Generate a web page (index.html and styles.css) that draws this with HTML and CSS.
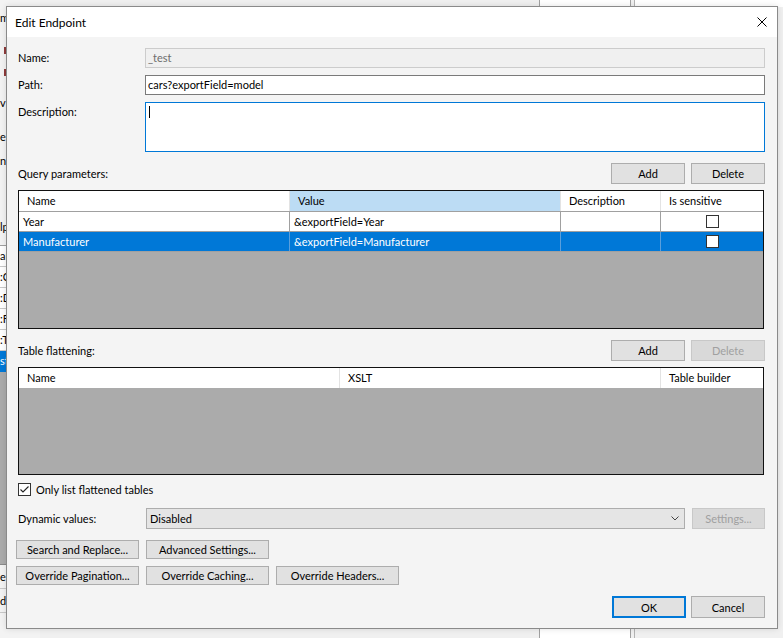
FILE: index.html
```html
<!DOCTYPE html>
<html>
<head>
<meta charset="utf-8">
<title>Edit Endpoint</title>
<link rel="stylesheet" href="styles.css">
</head>
<body>
<div class="desk">
  <div class="bgwin">
    <span class="frag f-m">m</span>
    <span class="mark mark1"></span>
    <span class="mark mark2"></span>
    <span class="frag f-v">v</span>
    <span class="frag f-e">e</span>
    <span class="frag f-ne">n</span>
    <span class="frag f-lp">lp</span>
    <div class="bglist">
      <div class="bgrow">ar</div>
      <div class="bgrow">:C</div>
      <div class="bgrow">:D</div>
      <div class="bgrow">:F</div>
      <div class="bgrow">:T</div>
      <div class="bgrow sel">st</div>
      <div class="bgfill"></div>
      <div class="bgrow tall">e</div>
      <div class="bgrow tall">dv</div>
    </div>
  </div>
  <div class="bgcol"></div>
  <div class="bgline"></div>
  <div class="bgtopright"></div>

  <div class="dialog">
    <div class="titlebar">
      <span class="title">Edit Endpoint</span>
      <svg class="close" width="10" height="10" viewBox="0 0 10 10"><path d="M0.5 0.5L9.5 9.5M9.5 0.5L0.5 9.5" stroke="#000" stroke-width="1" fill="none"/></svg>
    </div>
    <div class="body">
      <div class="form">
        <div class="lbl">Name:</div>
        <div class="input disabled">_test</div>
        <div class="lbl">Path:</div>
        <div class="input">cars?exportField=model</div>
        <div class="lbl">Description:</div>
        <div class="input focus"><span class="caret"></span></div>
      </div>

      <div class="sect">
        <span class="sect-label">Query parameters:</span>
        <button class="btn">Add</button>
        <button class="btn">Delete</button>
      </div>

      <div class="grid g1">
        <div class="ghead cols1">
          <div class="hc">Name</div>
          <div class="hc hl">Value</div>
          <div class="hc">Description</div>
          <div class="hc">Is sensitive</div>
        </div>
        <div class="grow cols1">
          <div class="gc">Year</div>
          <div class="gc">&amp;exportField=Year</div>
          <div class="gc"></div>
          <div class="gc center"><span class="cb"></span></div>
        </div>
        <div class="grow cols1 selected">
          <div class="gc">Manufacturer</div>
          <div class="gc">&amp;exportField=Manufacturer</div>
          <div class="gc"></div>
          <div class="gc center"><span class="cb"></span></div>
        </div>
        <div class="gfill"></div>
      </div>

      <div class="sect">
        <span class="sect-label">Table flattening:</span>
        <button class="btn">Add</button>
        <button class="btn dis">Delete</button>
      </div>

      <div class="grid g2">
        <div class="ghead cols2">
          <div class="hc">Name</div>
          <div class="hc">XSLT</div>
          <div class="hc">Table builder</div>
        </div>
        <div class="gfill"></div>
      </div>

      <div class="check-row">
        <span class="cb checked"><svg width="11" height="11" viewBox="0 0 11 11"><path d="M1.5 5.5L4 8L9.5 2.5" stroke="#222" stroke-width="1.1" fill="none"/></svg></span>
        <span>Only list flattened tables</span>
      </div>

      <div class="dyn-row">
        <span class="dyn-label">Dynamic values:</span>
        <div class="combo">
          <span>Disabled</span>
          <svg class="chev" width="8" height="5" viewBox="0 0 8 5"><path d="M0.5 0.5L4 4L7.5 0.5" stroke="#444" stroke-width="1" fill="none"/></svg>
        </div>
        <button class="btn dis settings">Settings...</button>
      </div>

      <div class="btn-row first">
        <button class="btn wide">Search and Replace...</button>
        <button class="btn wide">Advanced Settings...</button>
      </div>
      <div class="btn-row">
        <button class="btn wide">Override Pagination...</button>
        <button class="btn wide">Override Caching...</button>
        <button class="btn wide">Override Headers...</button>
      </div>

      <div class="ok-row">
        <button class="btn ok">OK</button>
        <button class="btn cancel">Cancel</button>
      </div>
    </div>
  </div>
</div>
</body>
</html>
```

FILE: styles.css
```css
* { box-sizing: border-box; }
html, body { margin: 0; padding: 0; }
body {
  width: 783px;
  height: 638px;
  overflow: hidden;
  background: #f0f0f0;
  font-family: "Lato", "Noto Sans", sans-serif;
  font-size: 11px;
  color: #000;
}
.desk { position: relative; width: 783px; height: 638px; }

/* background window (partially covered) */
.bgwin { position: absolute; left: 0; top: 0; width: 40px; height: 638px; background: #f3f3f3; }
.frag { position: absolute; line-height: 14px; white-space: nowrap; }
.f-m { left: 0; top: 11px; }
.f-v { left: 0; top: 96px; }
.f-e { left: 0; top: 130px; }
.f-ne { left: 0; top: 154px; }
.f-lp { left: 0; top: 220px; }
.mark { position: absolute; left: 4px; width: 2px; height: 7px; background: #8e3a3a; }
.mark1 { top: 47px; }
.mark2 { top: 69px; }
.bglist { position: absolute; left: 0; top: 245px; width: 40px; border-top: 1px solid #a0a0a0; display: flex; flex-direction: column; background: #fff; }
.bgrow { height: 21px; line-height: 20px; border-bottom: 1px solid #c8c8c8; padding-left: 0; white-space: nowrap; }
.bgrow.sel { background: #0078d7; color: #fff; border-bottom-color: #0078d7; }
.bgrow.tall { height: 24px; line-height: 23px; background: #f3f3f3; }
.bgfill { height: 193px; background: #ababab; border-bottom: 1px solid #8a8a8a; }

.bgcol { position: absolute; left: 539px; top: 0; width: 92px; height: 638px; background: #fff; border-left: 1px solid #a0a0a0; border-right: 1px solid #a0a0a0; }
.bgline { position: absolute; left: 634px; top: 0; width: 1px; height: 638px; background: #b4b4b4; }
.bgtopright { position: absolute; left: 635px; top: 0; width: 148px; height: 7px; background: #fff; }

/* dialog */
.dialog {
  position: absolute;
  left: 6px;
  top: 6px;
  width: 772px;
  height: 623px;
  border: 1px solid #8a8a8a;
  background: #f4f4f4;
  display: flex;
  flex-direction: column;
  box-shadow: 0 0 6px rgba(0,0,0,0.12);
}
.titlebar {
  height: 30px;
  flex: none;
  background: #fff;
  display: flex;
  align-items: center;
  padding-left: 8px;
}
.title { font-size: 12px; }
.close { margin-left: auto; margin-right: 10px; }

.body {
  flex: 1;
  padding: 11px 12px 0 11px;
  display: flex;
  flex-direction: column;
}

.form {
  display: grid;
  grid-template-columns: 127px 1fr;
  grid-template-rows: 20px 20px 50px;
  row-gap: 7px;
}
.lbl { line-height: 20px; }
.input {
  border: 1px solid #7a7a7a;
  background: #fff;
  padding: 0 2px;
  line-height: 18px;
  white-space: nowrap;
}
.input.disabled { background: #f0f0f0; border-color: #cccccc; color: #6d6d6d; }
.input.focus { border-color: #0078d7; padding: 3px 3px; }
.caret { display: block; width: 1px; height: 12px; background: #000; }

.sect {
  margin-top: 11px;
  height: 21px;
  display: flex;
  align-items: center;
  gap: 6px;
}
.sect-label { flex: 1; }

.btn {
  font-family: inherit;
  font-size: 11px;
  color: #000;
  background: #e1e1e1;
  border: 1px solid #adadad;
  margin: 0;
  padding: 0;
  height: 21px;
  width: 74px;
  display: flex;
  align-items: center;
  justify-content: center;
  white-space: nowrap;
}
.btn.dis { background: #d9d9d9; border-color: #c8c8c8; color: #a0a0a0; }

.grid {
  margin-top: 6px;
  margin-right: 1px;
  border: 1px solid #111;
  background: #ababab;
  display: flex;
  flex-direction: column;
}
.g1 { height: 139px; }
.g2 { height: 108px; }
.cols1 { display: grid; grid-template-columns: 271px 271px 100px 1fr; }
.cols2 { display: grid; grid-template-columns: 321px 321px 1fr; }
.ghead { height: 21px; background: #fff; border-bottom: 1px solid #a0a0a0; }
.g2 .ghead { border-bottom: none; height: 20px; }
.hc { padding-left: 8px; line-height: 20px; border-right: 1px solid #e3e3e3; white-space: nowrap; }
.hc:last-child { border-right: none; }
.hc.hl { background: #bcdcf4; }
.grow { height: 20px; background: #fff; border-bottom: 1px solid #a0a0a0; }
.gc { padding-left: 4px; line-height: 19px; border-right: 1px solid #a0a0a0; white-space: nowrap; }
.gc:last-child { border-right: none; }
.gc.center { display: flex; align-items: center; justify-content: center; padding-left: 0; }
.grow.selected { background: #0078d7; color: #fff; }
.grow.selected .gc { border-right-color: #5a9fdc; }
.gfill { flex: 1; background: #ababab; }

.cb {
  display: inline-flex;
  align-items: center;
  justify-content: center;
  width: 13px;
  height: 13px;
  border: 1px solid #333;
  background: #fff;
}

.check-row {
  margin-top: 8px;
  height: 13px;
  display: flex;
  align-items: center;
  gap: 5px;
  line-height: 13px;
}

.dyn-row {
  margin-top: 12px;
  height: 21px;
  display: flex;
  align-items: center;
  gap: 7px;
}
.dyn-label { width: 121px; }
.combo {
  flex: 1;
  height: 21px;
  background: #e5e5e5;
  border: 1px solid #adadad;
  display: flex;
  align-items: center;
  padding: 0 5px 0 3px;
}
.chev { margin-left: auto; }
.btn.settings { width: 73px; }

.btn-row {
  margin-top: 7px;
  margin-left: -2px;
  display: flex;
  gap: 7px;
}
.btn-row.first { margin-top: 11px; }
.btn.wide { width: 123px; height: 19px; }

.ok-row {
  margin-top: 11px;
  display: flex;
  justify-content: flex-end;
  gap: 5px;
}
.btn.ok { height: 22px; border: 2px solid #0078d7; }
.btn.cancel { height: 22px; }
```
